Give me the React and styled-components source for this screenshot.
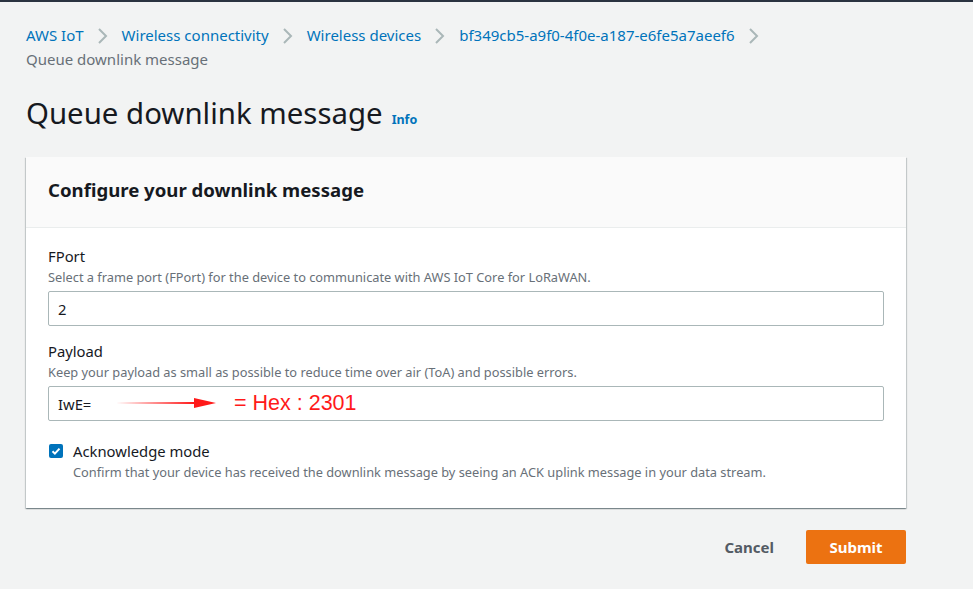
import React from 'react';
import styled, { createGlobalStyle } from 'styled-components';

const GlobalStyle = createGlobalStyle`
  html, body {
    margin: 0;
    padding: 0;
    background: #f2f3f3;
    font-family: "Noto Sans", "Open Sans", Arial, sans-serif;
    color: #16191f;
  }
`;

const crumbs = [
  'AWS IoT',
  'Wireless connectivity',
  'Wireless devices',
  'bf349cb5-a9f0-4f0e-a187-e6fe5a7aeef6',
];

function Chevron() {
  return (
    <svg width="20" height="20" viewBox="0 0 20 20">
      <path d="M7 3l7 7-7 7" fill="none" stroke="#aab7b8" strokeWidth="2" />
    </svg>
  );
}

function App() {
  return (
    <>
      <GlobalStyle />
      <Page>
        <Breadcrumbs>
          {crumbs.map((c) => (
            <Crumb key={c}>
              <CrumbLink>{c}</CrumbLink>
              <Chevron />
            </Crumb>
          ))}
          <CurrentCrumb>Queue downlink message</CurrentCrumb>
        </Breadcrumbs>

        <TitleRow>
          <Title>Queue downlink message</Title>
          <Info>Info</Info>
        </TitleRow>

        <Card>
          <CardHeader>
            <CardTitle>Configure your downlink message</CardTitle>
          </CardHeader>
          <CardBody>
            <Field>
              <Label>FPort</Label>
              <Hint>
                Select a frame port (FPort) for the device to communicate with AWS IoT Core for LoRaWAN.
              </Hint>
              <InputBox>2</InputBox>
            </Field>
            <Field>
              <Label>Payload</Label>
              <Hint>
                Keep your payload as small as possible to reduce time over air (ToA) and possible errors.
              </Hint>
              <InputBox>
                IwE=
                <Annotation>
                  <svg width="100" height="12" viewBox="0 0 100 12">
                    <path d="M0 6 L78 5 L78 1 L100 6 L78 11 L78 7 Z" fill="#ff1a1a" />
                  </svg>
                  <span>= Hex : 2301</span>
                </Annotation>
              </InputBox>
            </Field>
            <CheckRow>
              <Checkbox>
                <svg width="10" height="10" viewBox="0 0 10 10">
                  <path d="M1.5 5.2l2.4 2.4 4.6-5" fill="none" stroke="#fff" strokeWidth="2" />
                </svg>
              </Checkbox>
              <div>
                <Label>Acknowledge mode</Label>
                <Hint>
                  Confirm that your device has received the downlink message by seeing an ACK uplink message in your data stream.
                </Hint>
              </div>
            </CheckRow>
          </CardBody>
        </Card>

        <Actions>
          <LinkButton type="button">Cancel</LinkButton>
          <PrimaryButton type="button">Submit</PrimaryButton>
        </Actions>
      </Page>
    </>
  );
}

const Page = styled.div`
  width: 973px;
  height: 589px;
  box-sizing: border-box;
  border-top: 2px solid #2a3340;
  padding: 21px 67px 0 26px;
  overflow: hidden;
`;

const Breadcrumbs = styled.nav`
  display: flex;
  flex-wrap: wrap;
  align-items: center;
  font-size: 15px;
  line-height: 24px;
`;

const Crumb = styled.div`
  display: flex;
  align-items: center;
  gap: 8px;
  margin-right: 10px;

  svg {
    margin-top: 1px;
  }
`;

const CrumbLink = styled.span`
  color: #0073bb;
`;

const CurrentCrumb = styled.div`
  width: 100%;
  color: #687078;
`;

const TitleRow = styled.div`
  display: flex;
  align-items: baseline;
  gap: 9px;
  margin-top: 23px;
`;

const Title = styled.h1`
  margin: 0;
  font-size: 29.4px;
  font-weight: 400;
  line-height: 38px;
  color: #16191f;
`;

const Info = styled.span`
  font-size: 12.5px;
  font-weight: 700;
  color: #0073bb;
`;

const Card = styled.section`
  margin-top: 25px;
  width: 880px;
  background: #fff;
  box-shadow: 0 1px 1px 0 rgba(0, 28, 36, 0.3), 1px 1px 1px 0 rgba(0, 28, 36, 0.15),
    -1px 1px 1px 0 rgba(0, 28, 36, 0.15);
`;

const CardHeader = styled.header`
  background: #fafafa;
  border-bottom: 1px solid #eaeded;
  height: 71px;
  box-sizing: border-box;
  display: flex;
  align-items: center;
  padding: 0 22px 5px;
`;

const CardTitle = styled.h2`
  margin: 0;
  font-size: 18.6px;
  font-weight: 700;
  color: #16191f;
`;

const CardBody = styled.div`
  padding: 17px 22px 26px;
  display: flex;
  flex-direction: column;
  gap: 14px;
`;

const Field = styled.div`
  display: flex;
  flex-direction: column;
`;

const Label = styled.div`
  font-size: 14.8px;
  line-height: 22px;
  color: #16191f;
`;

const Hint = styled.div`
  font-size: 12.8px;
  line-height: 20px;
  color: #687078;
`;

const InputBox = styled.div`
  position: relative;
  margin-top: 4px;
  height: 35px;
  box-sizing: border-box;
  border: 1px solid #aab7b8;
  border-radius: 2px;
  padding: 0 9px;
  display: flex;
  align-items: center;
  font-size: 14.8px;
  color: #16191f;
  background: #fff;
`;

const Annotation = styled.div`
  position: absolute;
  left: 67px;
  top: 2px;
  display: flex;
  align-items: center;
  gap: 18px;
  color: #ff1a1a;
  font-family: "Liberation Sans", Arial, sans-serif;
  font-size: 21.5px;
  line-height: 28px;
`;

const CheckRow = styled.div`
  display: flex;
  gap: 10px;
  margin-top: 5px;
`;

const Checkbox = styled.div`
  width: 14px;
  height: 14px;
  margin-top: 4px;
  margin-left: 1px;
  border-radius: 2px;
  background: #0073bb;
  display: flex;
  align-items: center;
  justify-content: center;
`;

const Actions = styled.div`
  width: 880px;
  margin-top: 22px;
  display: flex;
  justify-content: flex-end;
  align-items: center;
  gap: 32px;
`;

const LinkButton = styled.button`
  border: none;
  background: none;
  padding: 0;
  font-family: inherit;
  font-size: 15px;
  font-weight: 700;
  color: #545b64;
`;

const PrimaryButton = styled.button`
  width: 100px;
  height: 34px;
  border: none;
  border-radius: 2px;
  background: #ec7211;
  color: #fff;
  font-family: inherit;
  font-size: 15px;
  font-weight: 700;
`;

export default App;
